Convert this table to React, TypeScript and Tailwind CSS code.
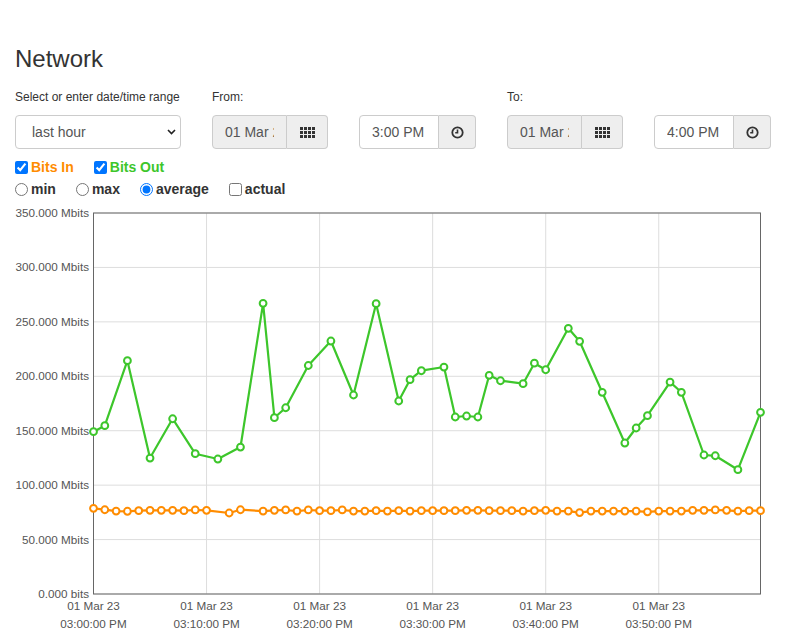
import { useState } from "react";

// Chart geometry (px inside the svg, which spans the full page width)
const X0 = 93.5;
const X1 = 760.5;
const TOP = 10;
const BOTTOM = 391;
const MAX = 350;
const MINUTES = 59;

const xAt = (m: number) => X0 + (m * (X1 - X0)) / MINUTES;
const yAt = (v: number) => BOTTOM - (v * (BOTTOM - TOP)) / MAX;

// [minute, Mbits]
const bitsOut: [number, number][] = [
  [0, 149.1], [1, 154.6], [3, 214.3], [5, 124.9], [7, 161.0], [9, 128.9],
  [11, 124.0], [13, 135.0], [15, 267.0], [16, 162.0], [17, 171.1], [19, 209.9],
  [21, 232.4], [23, 182.8], [25, 266.7], [27, 177.3], [28, 196.9], [29, 205.1],
  [31, 208.5], [32, 162.6], [33, 163.5], [34, 162.6], [35, 200.9], [36, 195.9],
  [38, 193.2], [39, 212.0], [40, 206.0], [42, 244.1], [43, 232.1], [45, 185.3],
  [47, 138.7], [48, 152.5], [49, 163.8], [51, 194.7], [52, 185.3], [54, 127.7],
  [55, 127.0], [57, 114.2], [59, 166.9],
];

const bitsInValues = [
  78.7, 77.4, 76.2, 76.0, 76.5, 76.9, 76.9, 76.9, 76.5, 77.2, 76.9, null, 74.4,
  77.4, null, 76.2, 76.9, 77.2, 76.2, 77.2, 76.5, 76.5, 77.2, 76.2, 76.2, 76.5,
  76.2, 76.5, 76.2, 76.5, 76.5, 76.5, 76.5, 76.9, 76.9, 76.5, 76.5, 76.5, 76.2,
  76.5, 76.9, 76.2, 76.2, 74.8, 76.2, 76.2, 76.2, 76.2, 76.2, 75.5, 76.2, 76.2,
  76.2, 76.9, 76.9, 77.2, 76.9, 76.2, 76.5, 76.5,
];
const bitsIn: [number, number][] = bitsInValues.flatMap((v, i) =>
  v === null ? [] : [[i, v] as [number, number]]
);

const yTicks = [
  "0.000 bits",
  "50.000 Mbits",
  "100.000 Mbits",
  "150.000 Mbits",
  "200.000 Mbits",
  "250.000 Mbits",
  "300.000 Mbits",
  "350.000 Mbits",
];
const xTicks = ["03:00:00 PM", "03:10:00 PM", "03:20:00 PM", "03:30:00 PM", "03:40:00 PM", "03:50:00 PM"];

function GridIcon() {
  const cells = [];
  for (let r = 0; r < 3; r++)
    for (let c = 0; c < 4; c++)
      cells.push(<rect key={`${r}-${c}`} x={c * 4} y={r * 4} width="3" height="3" fill="#333" />);
  return (
    <svg width="15" height="11" viewBox="0 0 15 11">
      {cells}
    </svg>
  );
}

function ClockIcon() {
  return (
    <svg width="13" height="13" viewBox="0 0 13 13">
      <circle cx="6.5" cy="6.5" r="5.2" fill="none" stroke="#333" strokeWidth="1.8" />
      <path d="M6.5 3.4V6.8H4.2" fill="none" stroke="#333" strokeWidth="1.6" />
    </svg>
  );
}

function DateGroup({ value }: { value: string }) {
  return (
    <div className="flex w-[116px] h-[34px]">
      <input
        readOnly
        value={value}
        className="w-[75px] h-full border border-[#ccc] rounded-l-[4px] bg-[#eee] px-3 text-[14px] text-[#555] outline-none"
      />
      <button className="flex-1 h-full border border-l-0 border-[#ccc] rounded-r-[4px] bg-[#eee] flex items-center justify-center">
        <GridIcon />
      </button>
    </div>
  );
}

function TimeGroup({ value }: { value: string }) {
  return (
    <div className="flex w-[117px] h-[34px]">
      <input
        readOnly
        value={value}
        className="w-[80px] h-full border border-[#ccc] rounded-l-[4px] bg-white px-3 text-[14px] text-[#555] outline-none"
      />
      <button className="flex-1 h-full border border-l-0 border-[#ccc] rounded-r-[4px] bg-[#eee] flex items-center justify-center">
        <ClockIcon />
      </button>
    </div>
  );
}

function Series({ points, color }: { points: [number, number][]; color: string }) {
  const d = points.map(([m, v], i) => `${i ? "L" : "M"}${xAt(m).toFixed(1)} ${yAt(v).toFixed(1)}`).join(" ");
  return (
    <g>
      <path d={d} fill="none" stroke={color} strokeWidth="2.2" strokeLinejoin="round" />
      {points.map(([m, v]) => (
        <circle key={m} cx={xAt(m)} cy={yAt(v)} r="3.4" fill="#fff" stroke={color} strokeWidth="2" />
      ))}
    </g>
  );
}

function Chart() {
  return (
    <svg width="787" height="431" className="block" style={{ fontFamily: '"Liberation Sans", Arial, sans-serif' }}>
      {yTicks.map((_, i) => {
        const y = yAt(i * 50);
        return <line key={i} x1={X0} x2={X1} y1={y} y2={y} stroke="#ddd" strokeWidth="1" />;
      })}
      {xTicks.map((_, i) => {
        const x = xAt(i * 10);
        return <line key={i} x1={x} x2={x} y1={TOP} y2={BOTTOM} stroke="#ddd" strokeWidth="1" />;
      })}
      <rect x={X0} y={TOP} width={X1 - X0} height={BOTTOM - TOP} fill="none" stroke="#666" strokeWidth="1" />
      {yTicks.map((t, i) => (
        <text key={t} x={89} y={yAt(i * 50) + 4} textAnchor="end" fontSize="11.7" fill="#555">
          {t}
        </text>
      ))}
      {xTicks.map((t, i) => (
        <text key={t} x={xAt(i * 10)} textAnchor="middle" fontSize="11.7" fill="#555">
          <tspan x={xAt(i * 10)} y={BOTTOM + 16}>01 Mar 23</tspan>
          <tspan x={xAt(i * 10)} y={BOTTOM + 34}>{t}</tspan>
        </text>
      ))}
      <Series points={bitsIn} color="#ff8c00" />
      <Series points={bitsOut} color="#3dc62b" />
    </svg>
  );
}

export default function App() {
  const [bitsInOn, setBitsInOn] = useState(true);
  const [bitsOutOn, setBitsOutOn] = useState(true);
  const [mode, setMode] = useState("average");
  const [actual, setActual] = useState(false);

  return (
    <div className="w-[787px] h-[634px] overflow-hidden bg-white text-[#333]" style={{ fontFamily: '"Liberation Sans", Arial, sans-serif' }}>
      <div className="px-[15px]">
        <h3 className="pt-[46px] text-[24px] leading-[26px] font-normal">Network</h3>

        <div className="flex gap-[31px] mt-[18px]">
          <div className="flex flex-col gap-[10px] w-[166px]">
            <label className="text-[12px] leading-[15px]">Select or enter date/time range</label>
            <div className="relative h-[34px]">
              <select className="appearance-none w-full h-full border border-[#ccc] rounded-[4px] bg-white pl-4 text-[14px] text-[#555] outline-none">
                <option>last hour</option>
                <option>last day</option>
                <option>last week</option>
              </select>
              <svg className="absolute right-[5px] top-[14px] pointer-events-none" width="9" height="6" viewBox="0 0 9 6">
                <path d="M1 1L4.5 4.5L8 1" fill="none" stroke="#222" strokeWidth="1.6" />
              </svg>
            </div>
          </div>
          <div className="flex flex-col gap-[10px]">
            <label className="text-[12px] leading-[15px]">From:</label>
            <DateGroup value="01 Mar 2023" />
          </div>
          <div className="flex flex-col gap-[10px]">
            <span className="h-[15px]" />
            <TimeGroup value="3:00 PM" />
          </div>
          <div className="flex flex-col gap-[10px]">
            <label className="text-[12px] leading-[15px]">To:</label>
            <DateGroup value="01 Mar 2023" />
          </div>
          <div className="flex flex-col gap-[10px]">
            <span className="h-[15px]" />
            <TimeGroup value="4:00 PM" />
          </div>
        </div>

        <div className="flex gap-5 mt-[9px] h-[18px] items-center text-[14px] font-bold">
          <label className="flex items-center gap-[3px] text-[#ff8c00]">
            <input type="checkbox" className="w-[13px] h-[13px]" checked={bitsInOn} onChange={(e) => setBitsInOn(e.target.checked)} />
            Bits In
          </label>
          <label className="flex items-center gap-[3px] text-[#3dc62b]">
            <input type="checkbox" className="w-[13px] h-[13px]" checked={bitsOutOn} onChange={(e) => setBitsOutOn(e.target.checked)} />
            Bits Out
          </label>
        </div>

        <div className="flex gap-5 mt-[4px] h-[18px] items-center text-[14px] font-bold text-[#333]">
          {["min", "max", "average"].map((m) => (
            <label key={m} className="flex items-center gap-[3px]">
              <input type="radio" name="mode" className="w-[13px] h-[13px]" checked={mode === m} onChange={() => setMode(m)} />
              {m}
            </label>
          ))}
          <label className="flex items-center gap-[3px]">
            <input type="checkbox" className="w-[13px] h-[13px]" checked={actual} onChange={(e) => setActual(e.target.checked)} />
            actual
          </label>
        </div>
      </div>

      <div className="mt-[5px]">
        <Chart />
      </div>
    </div>
  );
}
